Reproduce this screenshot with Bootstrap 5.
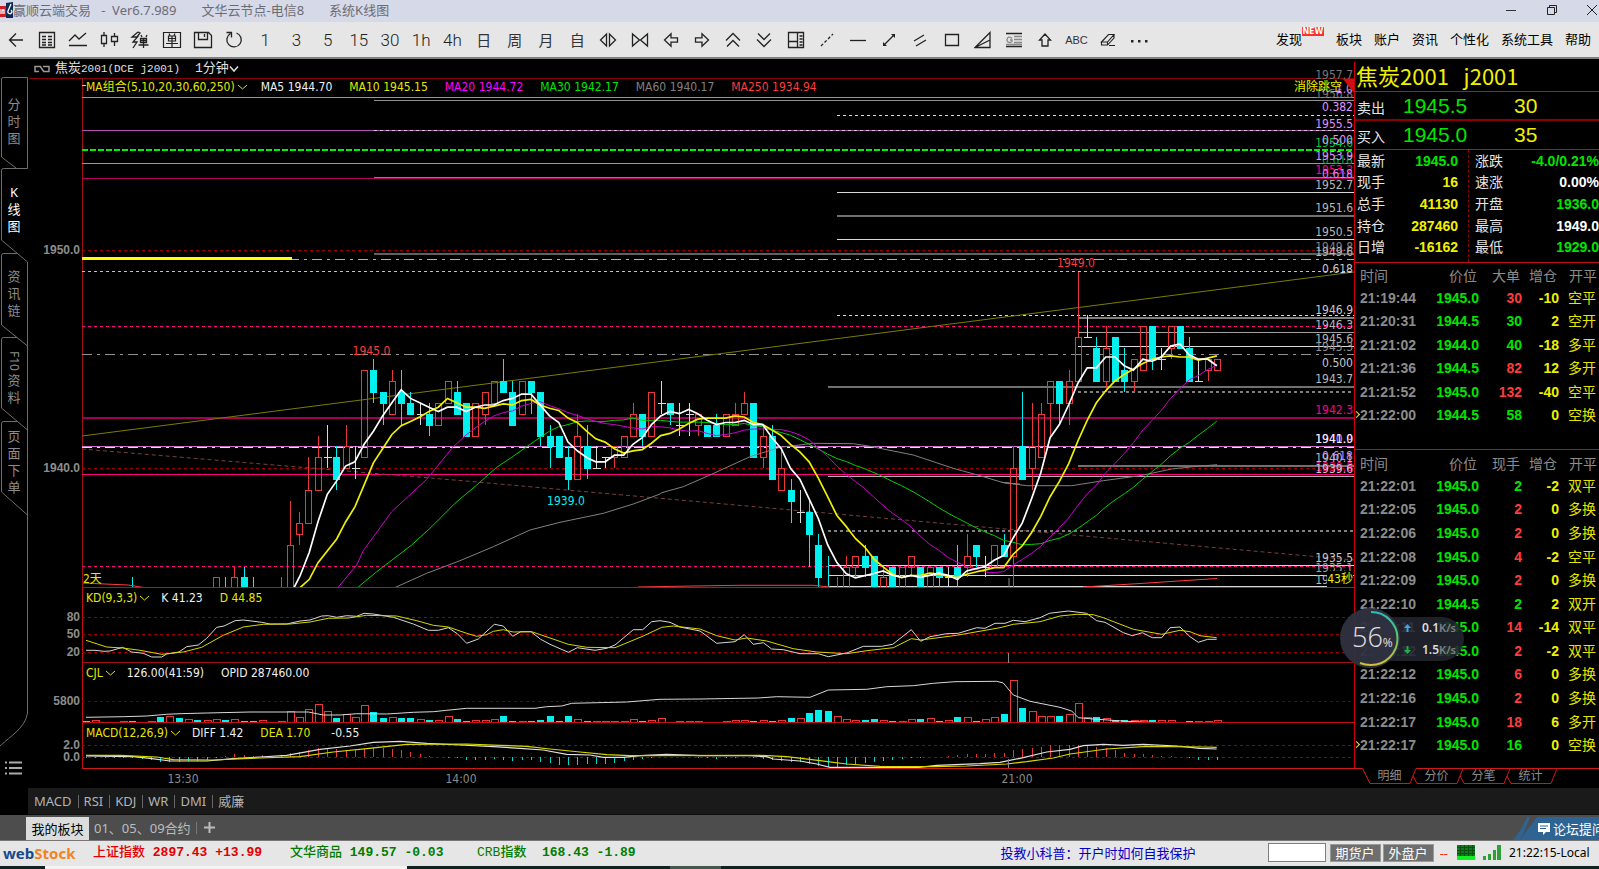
<!DOCTYPE html>
<html lang="zh-CN">
<head>
<meta charset="utf-8">
<meta name="viewport" content="width=device-width, initial-scale=1">
<title>赢顺云端交易</title>
<link href="https://cdn.jsdelivr.net/npm/bootstrap@5.3.0/dist/css/bootstrap.min.css" rel="stylesheet">
<style>
:root{--ui:"Noto Sans","Noto Sans CJK SC",sans-serif;--num:"Liberation Sans","Noto Sans CJK SC",sans-serif;--tah:"DejaVu Sans Condensed","Noto Sans","Noto Sans CJK SC",sans-serif}
body{font-family:var(--ui);font-size:13px;line-height:16px;background:#000;color:#e6e6e6;overflow-x:hidden}
button{background:none;border:0;padding:0;color:inherit;font:inherit;line-height:inherit}
a{color:inherit;text-decoration:none}
svg{display:block}
.ic{fill:none;stroke:#222;stroke-width:1.3}
.titlebar{height:22px;padding-bottom:2px;background:#d6d9e8;color:#6c6c74;font-size:13px;gap:25px}
.appmark{width:13px;height:16px}
.winctl{width:94px}
.winctl button{width:41px}
.winctl button:last-child{width:12px}
.toolbar{height:37px;background:#e6e6e6;border-bottom:2px solid #7c7f80;color:#222}
.tools{width:72.2%}
.tools button{flex:1 1 0;min-width:0;height:34px;display:flex;align-items:center;justify-content:center;font-size:15px;color:#333}
.tools .seg{font-family:Roboto,sans-serif;font-weight:300;font-size:17px;color:#222}
.tools .abc{font-family:"Liberation Sans",sans-serif;font-size:11px}
.topmenu{gap:12px;padding-right:8px;padding-bottom:2px;color:#000}
.newtag{position:absolute;left:100%;top:-4px;background:#ff2d2d;color:#fff;font-size:8px;line-height:9px;width:22px;height:9px;text-align:center;font-family:"DejaVu Sans",sans-serif;font-weight:700}
.discover{margin-right:22px}
.rail{width:28px;flex:none}
.rail nav{position:relative;height:689px;padding-top:18px}
.rail nav>svg{position:absolute;left:0;top:0}
.rail nav button{position:relative;display:flex;flex-direction:column;justify-content:center;align-items:center;height:84px;width:28px;padding-bottom:3px;font-size:13px;line-height:17px;color:#8c8c8c}
.rail nav button:first-of-type{height:92px}
.rail nav button.on{color:#fff}
.rail span{display:block;width:13px;word-break:break-all;text-align:center}
.rail .vert{writing-mode:vertical-rl;width:17px;font-size:12px;height:22px}
.rail .menu{display:flex;align-items:center;height:40px;padding-left:5px}
.chart{min-width:0}
.sym{height:19px;font-family:"Liberation Mono","Noto Sans CJK SC",monospace;font-size:11px;padding-left:5px;color:#e0e0e0}
.sym b{font-weight:400;font-size:13px}
.period{margin-left:15px}
.pane{display:grid}
.pane>*{grid-area:1/1}
.pane>svg{width:100%;height:auto;overflow:visible}
.pane .legend{font-family:var(--tah);font-size:12px;padding-left:58px;gap:17px;height:18px;position:relative;color:#f0f0f0;white-space:nowrap}
.pane .sub{height:20px}
.legend button{display:flex;align-items:center;gap:2px;color:#e6e600;margin-right:-4px}
.sub button{margin-right:-6px}
.ylw{color:#e6e600}
.quote{width:245px;flex:none;position:relative;padding-top:3px}
.quote .in{border-left:1px solid #c00;height:706px}
.qname{font-family:"Noto Sans CJK SC",sans-serif;font-size:22px;line-height:26px;height:30px;color:#f0f000;border-bottom:1px solid #c01010;padding-left:1px;white-space:pre}
.qrow{display:grid;grid-template-columns:46px 111px 1fr;font-size:14px;padding-left:2px;align-items:center;height:29px}
.qrow span{padding-top:3px}
.qrow b{font:400 21px/28px var(--num)}
.sell{border-bottom:2px solid #8b0000}
.buy{border-bottom:1px solid #c01010}
.g{color:#00e600}.r{color:#ff3c3c}.y{color:#f0f000}.w{color:#fff}
table{border-collapse:collapse;width:100%;table-layout:fixed}
td,th{padding:0;white-space:nowrap;font-size:14px;line-height:18px;vertical-align:middle}
td.n{font:700 14px/18px var(--num);text-align:right}
.stats{height:113px;border-bottom:1px solid #c01010;display:grid;grid-template-columns:113px 1fr}
.stats table{height:108px}
.stats th{font-weight:400;padding-left:2px;width:36px}
.stats td{padding-right:10px}
.stats div+div{border-left:1px dashed #8b0000}
.stats div+div th{padding-left:6px;width:40px}
.stats div+div td{padding-right:0}
.deals th{font-weight:400;color:#8c8c8c;text-align:right;padding-right:2px}
.deals th:first-child,.deals td:first-child{text-align:left;padding-left:5px;color:#8c8c8c}
.deals td.k{color:#e6e600;text-align:right;padding-right:3px}
.d1{height:187px;border-bottom:1px solid #c01010;padding-top:2px}
.d1 table{height:162px}.d2 table{height:304px}
.d2{height:319px;padding-top:3px}
.deals thead tr{height:21px}
.c1{width:68px}.c2{width:56px}.c3{width:43px}.c4{width:37px}
.now td:first-child{position:relative}
.now td:first-child::before{content:"";position:absolute;left:-1px;top:50%;width:5px;height:5px;margin-top:-3px;border:solid #f0f000;border-width:1px 1px 0 0;transform:rotate(45deg)}
.qtabs{display:grid;height:20px}
.qtabs>*{grid-area:1/1}
.qtabs div{padding-left:12px;position:relative}
.qtabs button{width:47px;height:16px;font-size:12px;color:#8c8c8c}
.inds{background:#1a1a1a;height:27px;padding-left:6px;color:#b4b4b4;border-bottom:1px solid #0c0c0c}
.inds button+button::before{content:"";display:inline-block;width:1px;height:13px;background:#666;margin:0 5px 0 6px;vertical-align:-2px}
.boards{background:#4d4d4d;height:26px;padding-left:26px;color:#bdbdbd;border-bottom:1px solid #777}
.boards .on{background:#dcdcdc;color:#000;height:23px;width:63px}
.boards .b2{padding-left:5px}
.boards .plus{border-left:1px solid #777;margin-left:5px;padding-left:7px;height:12px}
.forum{display:flex;align-items:center;color:#fff;height:23px;width:86px;overflow:hidden;position:relative;padding-left:25px;gap:3px;white-space:nowrap}
.forum .bg{position:absolute;left:0;top:0}
.forum .lab{position:relative;flex:none}
.status{background:#e6e6e6;height:25px;padding-bottom:2px;color:#000}
.logo{font:700 15px/18px "Noto Sans",sans-serif;color:#164a8c;width:93px;padding-left:3px}
.logo i{font-style:normal;color:#f58220}
.idx{font:700 13px/16px "Liberation Mono","Noto Sans CJK SC",monospace;white-space:pre;color:#007c00}
.idx span{font-weight:500;font-size:13px}
.up{color:#e00000;width:197px}.dn{width:187px}
.tip{color:#0000c8;margin-right:72px}
.status input{width:58px;height:19px;border:1px solid #808080;background:#fff;padding:0 2px}
.status .acct{width:51px;height:18px;background:#6e6e6e;color:#fff;border:1px solid #9a9a9a;font-size:13px;line-height:14px;margin-right:2px}
.dash{padding:0 5px 0 4px;color:#ff2020}
.clock{font-size:12px;width:90px}
.taskbar{height:3px;background:#10241f;display:grid;grid-template-columns:45px 362px 263px 51px 1fr}
.taskbar i:nth-child(2){background:#f4f4f4}.taskbar i:nth-child(4){background:#44584f}
.speed{position:absolute;left:-14px;top:549px;width:124px;height:60px}
.speed .pill{position:absolute;left:30px;top:9px;width:94px;height:44px;border-radius:0 22px 22px 0;background:rgba(34,36,48,.88);font-size:12px;font-weight:600;color:#dcdcdc;padding-left:34px;display:grid;grid-template-rows:1fr 1fr}
.speed .pill div{display:flex;align-items:center;gap:9px;white-space:nowrap}
.speed small{color:#7e8088;font-size:11px}
.speed .pill svg{margin-right:2px}
.speed .ring{position:absolute;left:0;top:0}
.speed .pct{position:absolute;left:12px;top:14px;font:300 27px/30px "Open Sans","Noto Sans",sans-serif;color:#e0e0e0}
.speed .pct span{font-size:12px;font-weight:400}
</style>
</head>
<body>
<header>
<div class="titlebar d-flex align-items-center">
  <div class="d-flex align-items-center"><svg class="appmark" viewBox="0 0 13 16"><path d="M0 4h6v11H0z" fill="#d01c24"/><path d="M6 1l7-1v16H6z" fill="#0c2a55"/><path d="M0 12V7M2 12V8h2v4M11 2L8 9a2 2 0 1 0 3-1" stroke="#fff" fill="none" stroke-width="1.3"/></svg>
  <span class="text-nowrap">赢顺云端交易&nbsp;&nbsp; -&nbsp; Ver6.7.989</span></div>
  <span>文华云节点-电信8</span><span>系统K线图</span>
  <div class="winctl d-flex ms-auto">
    <button aria-label="最小化"><svg class="ic" width="12" height="12"><path d="M1 6.500h10" stroke="#333" stroke-width="1"/></svg></button>
    <button aria-label="还原"><svg class="ic" width="12" height="12"><path d="M1.500 3.500h7v7h-7zM3.500 3.500v-2h7v7h-2" stroke-width="1"/></svg></button>
    <button aria-label="关闭"><svg class="ic" width="11" height="12"><path d="M0 1l10 10M10 1L0 11" stroke-width="1"/></svg></button>
  </div>
</div>
<div class="toolbar d-flex align-items-center">
  <div class="tools d-flex">
    <button aria-label="返回"><svg class="ic" width="16" height="16"><path d="M15 8H2M8 1.500L1.500 8 8 14.500"/></svg></button>
    <button aria-label="报价"><svg class="ic" width="18" height="18"><path d="M1.500 1.500h15v15h-15zM4 5.500h4M10 5.500h4M4 8.500h4M10 8.500h4M4 11.500h4M10 11.500h4M4 14h4M10 14h4"/></svg></button>
    <button aria-label="分时"><svg class="ic" width="20" height="18"><path d="M1 10l6-6 4 4 7-6M1 14.500h18"/></svg></button>
    <button aria-label="K线"><svg class="ic" width="20" height="18"><path d="M2.500 4.500h5v8h-5zM5 1v3.500M5 12.500V16M12.500 5.500h6v5h-6zM15.500 2v3.500M15.500 10.500V15"/></svg></button>
    <button aria-label="闪弹"><svg class="ic" width="20" height="18"><path d="M8 1L2 6h5.500L3 11h4l-4 6M8 1l2 1-3 4M11 4l1 2M17 4l-1 2M10.500 7.500h6v4h-6zM10.500 9.500h6M13.500 7.500V17M8.500 14h10"/></svg></button>
    <button aria-label="下单"><svg class="ic" width="20" height="18"><path d="M1.500 1.500h17v15h-17zM7 2.500l1 2M13 2.500l-1 2M6.500 5h7v5h-7zM6.500 7.500h7M10 5v11M4 12.500h12" stroke-width="1.2"/></svg></button>
    <button aria-label="保存"><svg class="ic" width="20" height="18"><path d="M1.500 1.500h14l3 3v12h-17zM5.500 1.500v7h9v-7M11.500 3v3"/></svg></button>
    <button aria-label="刷新"><svg class="ic" width="18" height="18"><path d="M11.500 2a7.200 7.200 0 1 1-6 .5M1.500 1.500h5v5"/></svg></button>
    <button class="seg">1</button><button class="seg">3</button><button class="seg">5</button><button class="seg">15</button><button class="seg">30</button><button class="seg">1h</button><button class="seg">4h</button>
    <button>日</button><button>周</button><button>月</button><button>自</button>
    <button aria-label="放大"><svg class="ic" width="18" height="16"><path d="M7.500 2v12L1.500 8zM10.500 2v12l6-6z"/></svg></button>
    <button aria-label="缩小"><svg class="ic" width="18" height="16"><path d="M1.500 2v12l7-6zM16.500 2v12l-7-6z"/></svg></button>
    <button aria-label="左移"><svg class="ic" width="16" height="16"><path d="M1.500 8L8 1.800v4h6.500v4.400H8v4z"/></svg></button>
    <button aria-label="右移"><svg class="ic" width="16" height="16"><path d="M14.500 8L8 1.800v4H1.500v4.400H8v4z"/></svg></button>
    <button aria-label="上翻"><svg class="ic" width="16" height="16"><path d="M1 8.500l7-7 7 7M2 14.500l6-6 6 6"/></svg></button>
    <button aria-label="下翻"><svg class="ic" width="16" height="16"><path d="M1 7.500l7 7 7-7M2 1.500l6 6 6-6"/></svg></button>
    <button aria-label="布局"><svg class="ic" width="18" height="18"><path d="M1.500 1.500h15v15h-15zM10.500 1.500v15M1.500 10.500h9M12.500 5h3M12.500 8h3M12.500 11h3M12.500 14h3"/></svg></button>
    <button aria-label="虚线"><svg class="ic" width="16" height="16"><path d="M2 14L14 2" stroke-dasharray="3 2"/></svg></button>
    <button aria-label="横线"><svg class="ic" width="16" height="16"><path d="M0 8.500h16"/></svg></button>
    <button aria-label="线段"><svg class="ic" width="16" height="16"><path d="M3 13L13 3"/><path d="M10 2h4v4zM2 10v4h4z" fill="#222" stroke="none"/></svg></button>
    <button aria-label="平行线"><svg class="ic" width="16" height="16"><path d="M2 9l10-6M4 14l10-6"/></svg></button>
    <button aria-label="矩形"><svg class="ic" width="16" height="16"><path d="M1.500 2.500h13v11h-13z"/></svg></button>
    <button aria-label="扇形"><svg class="ic" width="18" height="18"><path d="M1 16.500L16 1.500v15zM1 16.500L16 9"/></svg></button>
    <button aria-label="黄金分割"><svg class="ic" width="16" height="16"><path d="M0 1.500h16M0 14.500h16"/><path d="M8 4.500h8M8 7.500h8M8 10.500h8M0 12.500h16M6 6.500C4 4 1 5 1 8s4 3 5 1.500V8H4" stroke="#888"/></svg></button>
    <button aria-label="箭头"><svg class="ic" width="14" height="16"><path d="M7 2L1.500 8H4v6h6V8h2.500z"/></svg></button>
    <button class="abc">ABC</button>
    <button aria-label="橡皮"><svg class="ic" width="16" height="14"><path d="M1.500 9l7-7.500h5.500l-6.500 7.500zM1.500 9v3h6l6.500-7V1.500M7.500 9v3M9 12.500h6" stroke-width="1.1"/></svg></button>
    <button aria-label="更多"><svg width="18" height="8"><path d="M1 4h2.500v2.500H1zM8 4h2.500v2.500H8zM15 4h2.500v2.500H15z" fill="#222"/></svg></button>
  </div>
  <nav class="topmenu d-flex ms-auto">
    <a href="#" class="discover position-relative">发现<span class="newtag">NEW</span></a><a href="#">板块</a><a href="#">账户</a><a href="#">资讯</a><a href="#">个性化</a><a href="#">系统工具</a><a href="#">帮助</a>
  </nav>
</div>
</header>

<main class="d-flex">
  <aside class="rail">
    <nav>
      <svg width="28" height="689" viewBox="0 59 28 689" fill="none" stroke="#6e6e6e"><path d="M16 168L1.500 157V79q0-1.500 2-1.500h24V168.500M27.500 168.500h-24q-2 0-2 2V240l26 22V713Q26 724 14 734T0 746M17 253.500H3.500q-2 0-2 2V325l26 21M17 337.500H3.500q-2 0-2 2V408l26 22M17 421.500H3.500q-2 0-2 2V492l26 23"/></svg>
      <button><span>分时图</span></button><button class="on"><span>K线图</span></button><button><span>资讯链</span></button><button><span class="vert">F10</span><span>资料</span></button><button><span>页面下单</span></button>
    </nav>
    <button class="menu" aria-label="菜单"><svg width="17" height="14"><path d="M0 1.500h2M4 1.500h13M0 7h2M4 7h13M0 12.500h2M4 12.500h13" stroke="#aaa" stroke-width="2"/></svg></button>
  </aside>

  <section class="chart flex-grow-1">
    <div class="sym d-flex align-items-center"><svg class="me-1" width="18" height="10" fill="none" stroke="#999" stroke-width="1.500"><path d="M7 2.500H2v5h4M7 2l4 6M10 2.500h6v5h-5"/></svg><span><b>焦炭</b>2001(DCE j2001)</span><button class="period d-flex align-items-center"><b>1分钟</b><svg width="10" height="8" fill="none" stroke="#ddd" stroke-width="1.500"><path d="M1 1.500l4 4.500 4-4.500"/></svg></button></div>
    <div class="pane"><svg id="price" viewBox="28 78 1326 510"></svg>
      <div class="legend d-flex align-items-center"><button>MA组合(5,10,20,30,60,250)<svg width="11" height="8" fill="none" stroke="#e6e600"><path d="M1 2l4.500 4L10 2"/></svg></button><span>MA5 1944.70</span><span class="ylw">MA10 1945.15</span><span style="color:#f0f">MA20 1944.72</span><span style="color:#00e600">MA30 1942.17</span><span style="color:#808080">MA60 1940.17</span><span class="r">MA250 1934.94</span></div></div>
    <div class="pane"><svg id="kd" viewBox="28 588 1326 75"></svg>
      <div class="legend sub d-flex align-items-center"><button>KD(9,3,3)<svg width="11" height="8" fill="none" stroke="#e6e600"><path d="M1 2l4.500 4L10 2"/></svg></button><span>K 41.23</span><span class="ylw">D 44.85</span></div></div>
    <div class="pane"><svg id="vol" viewBox="28 663 1326 60"></svg>
      <div class="legend sub d-flex align-items-center"><button>CJL<svg width="11" height="8" fill="none" stroke="#e6e600"><path d="M1 2l4.500 4L10 2"/></svg></button><span>126.00(41:59)</span><span>OPID 287460.00</span></div></div>
    <div class="pane"><svg id="macd" viewBox="28 723 1326 65"></svg>
      <div class="legend sub d-flex align-items-center"><button>MACD(12,26,9)<svg width="11" height="8" fill="none" stroke="#e6e600"><path d="M1 2l4.500 4L10 2"/></svg></button><span>DIFF 1.42</span><span class="ylw">DEA 1.70</span><span class="ms-1">-0.55</span></div></div>
  </section>

  <aside class="quote">
    <div class="in">
      <div class="qname">焦炭2001   j2001</div>
      <div class="qrow sell"><span>卖出</span><b class="g">1945.5</b><b class="y">30</b></div>
      <div class="qrow buy"><span>买入</span><b class="g">1945.0</b><b class="y">35</b></div>
      <div class="stats">
        <div><table><tr><th>最新</th><td class="n g">1945.0</td></tr><tr><th>现手</th><td class="n y">16</td></tr><tr><th>总手</th><td class="n y">41130</td></tr><tr><th>持仓</th><td class="n y">287460</td></tr><tr><th>日增</th><td class="n y">-16162</td></tr></table></div>
        <div><table><tr><th>涨跌</th><td class="n g">-4.0/0.21%</td></tr><tr><th>速涨</th><td class="n w">0.00%</td></tr><tr><th>开盘</th><td class="n g">1936.0</td></tr><tr><th>最高</th><td class="n w">1949.0</td></tr><tr><th>最低</th><td class="n g">1929.0</td></tr></table></div>
      </div>
      <div class="deals d1"><table><colgroup><col class="c1"><col class="c2"><col class="c3"><col class="c4"><col></colgroup><thead><tr><th>时间</th><th>价位</th><th>大单</th><th>增仓</th><th>开平</th></tr></thead><tbody id="bigDeals"></tbody></table></div>
      <div class="deals d2"><table><colgroup><col class="c1"><col class="c2"><col class="c3"><col class="c4"><col></colgroup><thead><tr><th>时间</th><th>价位</th><th>现手</th><th>增仓</th><th>开平</th></tr></thead><tbody id="deals"></tbody></table></div>
    </div>
    <div class="qtabs">
      <svg width="245" height="20" viewBox="1354 768 245 20" fill="none" stroke="#d01818"><path d="M1354 768.500h8.500l7.500 15h40l6-15h183M1413 776l4 7.500h40l6-15M1460 776l4 7.500h40l6-15M1507 776l4 7.500h40l6-15"/></svg>
      <div class="d-flex"><button>明细</button><button>分价</button><button>分笔</button><button>统计</button></div>
    </div>
    <div class="speed">
      <div class="pill"><div><svg width="7" height="8"><path d="M3.500 0L7 4H4.500v4h-2V4H0z" fill="#38a8e8"/></svg><span>0.1<small>K/s</small></span></div><div><svg width="7" height="8"><path d="M3.500 8L7 4H4.500V0h-2v4H0z" fill="#22b14c"/></svg><span>1.5<small>K/s</small></span></div></div>
      <svg class="ring" width="60" height="60"><defs><linearGradient id="rg" x1="0" y1="0" x2="0" y2="1"><stop offset="0" stop-color="#28c0b8"/><stop offset=".5" stop-color="#60c860"/><stop offset="1" stop-color="#d0c038"/></linearGradient></defs><circle cx="30" cy="30" r="30" fill="#2f3240" fill-opacity=".95"/><path d="M31 4a26.500 26.500 0 0 1 0 53q-6 0-11-2" fill="none" stroke="url(#rg)" stroke-width="2"/></svg>
      <div class="pct">56<span>%</span></div>
    </div>
  </aside>
</main>

<footer>
<div class="d-flex"><div class="rail"></div><div class="inds flex-grow-1 d-flex align-items-center"><button>MACD</button><button>RSI</button><button>KDJ</button><button>WR</button><button>DMI</button><button>威廉</button></div></div>
<div class="boards d-flex align-items-end"><button class="on">我的板块</button><button class="b2 align-self-center">01、05、09合约</button><button class="plus align-self-center d-flex align-items-center" aria-label="添加"><svg width="11" height="11"><path d="M5.500 0v11M0 5.500h11" stroke="#bbb" stroke-width="2"/></svg></button>
<a href="#" class="forum ms-auto"><svg class="bg" width="86" height="23"><path d="M7 23L24 0h62v23z" fill="#2e6494"/><path d="M0 23Q8 14 14 0h3Q12 14 7 23z" fill="#2e6494"/></svg><svg class="lab" width="12" height="12"><path d="M0 0h12v9H8l-3 3V9H0z" fill="#fff"/><path d="M2 3h8M2 5.500h6" stroke="#2e6494"/></svg><span class="lab">论坛提问</span></a></div>
<div class="status d-flex align-items-center">
  <div class="logo">web<i>Stock</i></div>
  <div class="idx up"><span>上证指数</span> 2897.43 +13.99</div>
  <div class="idx dn"><span>文华商品</span> 149.57 -0.03</div>
  <div class="idx"><span>CRB指数</span>  168.43 -1.89</div>
  <a href="#" class="tip ms-auto">投教小科普：开户时如何自我保护</a>
  <input aria-label="代码" class="me-1"><button class="acct">期货户</button><button class="acct">外盘户</button>
  <span class="dash">--</span>
  <svg width="18" height="15" class="ms-1"><path d="M0 0h18v11H0z" fill="#0f7a1c"/><path d="M0 11h18v4H0z" fill="#10f020"/><path d="M0 2.500h18M0 5.500h18M0 8.500h18M3.500 0v11M7.500 0v11M11.500 0v11M15.500 0v11" stroke="#0a5012"/></svg>
  <svg width="18" height="15" class="mx-2"><path d="M0 11h3v4H0zM5 9h3v6H5zM10 5h3v10h-3zM14 0h4v15h-4z" fill="#2fa035"/></svg>
  <span class="clock">21:22:15-Local</span>
</div>
<div class="taskbar"><i></i><i></i><i></i><i></i><i></i></div>
</footer>

<script src="https://cdn.jsdelivr.net/npm/bootstrap@5.3.0/dist/js/bootstrap.bundle.min.js"></script>
<script>
const RED='#ff3c3c',CYAN='#00f0f0',FRAME='#c01010';
const X=i=>86+i*9.27, Y=p=>468.3-(p-1940)*21.83;
const hl=(y,x1,c,w=1,dash='',x2=1354)=>`<line x1="${x1}" x2="${x2}" y1="${y}" y2="${y}" stroke="${c}" stroke-width="${w}" stroke-dasharray="${dash}" shape-rendering="crispEdges"/>`;
const pl=(pts,c,w=1,extra='')=>`<polyline points="${pts.map(p=>p.map(v=>Math.round(v*10)/10).join(',')).join(' ')}" fill="none" stroke="${c}" stroke-width="${w}" ${extra}/>`;
const tx=(s,x,y,c,a='start',extra='')=>`<text x="${x}" y="${y+4.5}" fill="${c}" text-anchor="${a}" font-size="12" ${extra||'font-family="DejaVu Sans Condensed,Noto Sans,Noto Sans CJK SC,sans-serif"'}>${s}</text>`;
const ax=(s,y)=>tx(s,80,y-.5,'#8c8c8c','end','font-family="Liberation Sans,sans-serif" font-weight="700"');
// traced points: pairs in thirds of a pixel from an origin
const tr=(s,ox,oy)=>s.split(' ').map(p=>{const[a,b]=p.split(',').map(Number);return[ox+a/3,oy+b/3]});

// index, open, close, high, low (offset from 1900)
const raw=`5 34.4 34 35 34|14 34 35 35 34|15 34.4 34 35 34|16 34 35 35.5 34|17 35 34 35.5 34|18 34.4 34 35 34|21 34 34.3 35 34|22 34 36.5 38.5 34|23 37 37.5 38 36.5|24 37.5 39 40.5 37.5|25 39 40.5 41.5 39|26 40.5 40.5 42 40|27 40.5 39.5 41 39|28 40 41 42 40|29 40 40 41 39.5|30 40.5 44.5 44.5 40.5|31 44.5 43.5 45 43|32 43.5 43 43.5 42|33 42.5 44 44.5 42.5|34 43.5 43 44.5 42|35 43 42.5 43.5 42.5|36 42.5 42.5 43 42|37 42.5 42 43 41.5|38 42 43 43 42|39 43 44 44 43|40 43.5 42.5 44 42.5|41 43 41.5 43 41.5|42 41.5 43 43 41.5|43 42.5 43.5 43.5 42|44 43 44 44 43|45 44 43.5 45 43.5|46 43.5 42 44 42|47 42.5 44 44 42.5|48 44 43.5 44 42.5|49 43.5 41.5 43.5 41|50 41.5 41 42 40|51 41.5 40.5 41.5 40.5|52 40.5 39.5 41 39|53 39.5 41.5 42.5 39.5|54 41 40 42 39.5|55 40 40 41 40|56 40.5 40.5 40.5 40|57 40.5 41 41 40|58 40.5 41.5 41.5 40.5|59 41.5 42.5 43 41.5|60 42.5 41.5 42.5 41|61 41.5 43.5 43.5 41.5|62 43 43 44 42.5|63 43 42.5 43 42|64 42 42 43 41.5|65 42.5 42.5 43 41.5|66 42 42.5 42.5 41.5|67 42 41.5 42 41.5|68 42 41.5 42.5 41.5|69 41.5 42.5 42.5 41.5|70 42 42.5 43 42|71 42.5 43 43.5 42.5|72 43 40.5 43 40.5|73 40.5 41.5 42 40|74 41.5 39.5 42 39.5|75 39 40 41 39|76 39 38.5 39.5 37.5|77 38 38 39 37.5|78 38 37 38.5 35.5|79 36.5 35 37 34.5|80 34.4 34 36 34|81 34 34.4 35 34|82 34.5 35.5 36 34|83 35.5 36 36 35|84 36 35.5 36.5 35|85 36 34.5 36 34|86 34.5 35 35.5 34|87 35.5 34.5 35.5 34|88 34 35.5 35.5 34|89 35.5 36 36 35|90 35.5 34 35.5 34|91 34 35.5 35.5 34|92 35.5 35 35.5 34.5|93 35 35 35.5 34|94 35.5 35 36.5 34|95 35.5 36 37 35|96 36.5 36 36.5 35.5|97 35.5 35.5 36 35|98 35.5 36.5 36.5 35.5|99 36.5 36 37 36|100 36 40 41 34|101 41 39.5 43.5 39.5|102 40 41 43 39|103 40.5 42.5 43 40.5|104 43 44 44 41.5|105 44 43 44 42|106 43 44 44.5 42|107 44 46 49 44|108 46 46 47 46|109 45.5 44 46 44|110 44 45.5 46.5 43.5|111 46 44 46 44|112 44.5 44 45.5 43.5|113 44 45 45 43.5|114 44.5 46.5 46.5 44.5|115 46.5 45 46.5 44.5|116 45 45 45.5 44.5|117 45.5 46.5 46.5 45|118 46.5 45.5 46.5 45.5|119 45.5 44 46 44|120 44 44 45 44|121 44.5 45 45 44|122 44.5 45 45 44.5`;
const bars=raw.split('|').map(r=>r.split(' ').map(Number));
const close={};bars.forEach(b=>close[b[0]]=b[2]);
const ma=(n,from)=>{const o=[];for(let i=from;i<=122;i++){let s=0;for(let k=0;k<n;k++)s+=close[i-k];o.push([X(i),Y(1900+s/n)])}return o};

let s='';
s+=hl(78.5,29,'#8b0000')+hl(587.5,82,FRAME);
s+=`<path d="M82.500 78V588" stroke="#a01010" shape-rendering="crispEdges"/>`;
const P='#d070d0',G='#808080',L='#d8d8d8',HP='#ff0080',DP='#b80060',DR='#9a0000';
[[97.5,82,P],[100.5,374,'#909090'],[115.5,837,L,1,'3 3'],[130.5,82,'#b050b4',1],[130.5,374,'#e0c0e0',1,'3 3'],[150,82,'#00f000',2,'6 2'],[163.5,82,P],[178,82,DP,1],[177.5,374,'#c060a0'],[192.5,837,L],[216,837,'#707070',2],[239.5,837,L],[250.5,82,DR,1,'3 3'],[254,374,'#606060',2],[259.5,82,'#b0b0b0',1,'10 5 3 5'],[271.5,82,'#f0a0f0',1,'3 3'],[315.5,837,L,1,'3 3'],[318,1078,G,2],[326.5,82,HP,1,'3 3'],[332.5,1078,'#a0a0a0'],[346.5,1078,L],[354.5,82,'#909090',1,'10 5 3 5'],[387,828,'#707070',2],[392,1078,G,2,'3 3'],[418,82,'#a00058',2],[446.5,82,P],[447.5,82,'#e8e8e8',1,'10 5 3 5'],[466,1078,'#707070',2],[468.5,82,DR,1,'3 3'],[474.5,82,HP],[476.5,828,'#b0b0b0'],[531,828,G,2,'3 3'],[565.5,828,L],[566.5,82,HP,1,'3 3'],[575.5,828,L],[586.5,828,L,1,'',1327]].forEach(a=>s+=hl(...a));
s+=hl(258,82,'#ffff00',3,'',292);
s+=pl([[82,436],[1354,272]],'#7c7c00')+pl([[82,449],[460,480.500],[1354,560]],'#7a4040',1,'stroke-dasharray="4 3"');
s+=`<defs><clipPath id="plot"><path d="M83 79H1354V587H83z"/></clipPath></defs><g clip-path="url(#plot)">`;
bars.forEach(([i,o,c,h,l])=>{
  const x=Math.round(X(i))+.5, yo=Math.round(Y(1900+o))+.5, yc=Math.round(Y(1900+c))+.5, yh=Y(1900+h), yl=Y(1900+l);
  if(o===c) s+=`<path d="M${x} ${yh}V${yl}M${x-4} ${yc}h8" stroke="#d8d8d8" shape-rendering="crispEdges"/>`;
  else if(c>o) s+=`<path d="M${x} ${yh}V${yc}M${x} ${yo}V${yl}M${x-3} ${yc}h6V${yo}h-6z" fill="none" stroke="#e83838" shape-rendering="crispEdges"/>`;
  else s+=`<path d="M${x} ${yh}V${yl}" stroke="${CYAN}" shape-rendering="crispEdges"/><path d="M${x-3.500} ${yo-.5}h7V${yc+.5}h-7z" fill="${CYAN}" shape-rendering="crispEdges"/>`;
});
s+=pl([...tr('400,745 500,700 600,662 700,620 810,570 900,547 1030,520 1120,492 1200,462',260,340),...tr('65,458 130,440 210,405 330,350 420,322 520,310 640,311 680,317 820,345 940,385 1020,407 1090,428 1140,433',640,340),...tr('65,727 140,737 275,737 370,722 480,707 575,687 640,680 711,674',980,240)],G);
s+=pl([...tr('290,745 350,695 455,615 515,560 585,490 650,435 710,382 755,352 800,320 841,292 869,273',260,340),...ma(30,51)],'#00d000');
s+=pl([...tr('232,745 290,675 310,632 395,515 500,418 580,320',260,340),...ma(20,41)],'#d000d0');
s+=pl([...tr('118,745 148,718 174,668 230,597 257,545 285,500',260,340),...ma(10,31)],'#f0f000',1.7);
s+=pl([...tr('101,745 120,708 148,637 174,545 202,463',260,340),...ma(5,27)],'#ffffff',1.7);
s+=pl([[82,583],[128,585],[147,588]],RED)+pl([[638,587],[693,586],[740,585.3],[813,585.3],[830,587]],RED)+pl([[1083,587],[1140,583.500],[1217,578.500]],RED);
s+='<path d="M1009 578v10" stroke="#888"/></g>';
[['1957.7',74.5,'#777'],['1956.8',93,'#777'],['1.0',88,'#e080ff'],['0.382',106,'#e090ff'],['1955.5',123,'#e090ff'],['1954.6',142,'#00c840'],['0.500',139,'#e090ff'],['0.618',159,'#00a040'],['1953.9',155,'#e090ff'],['1953.2',169,HP],['0.618',173,'#e080ff'],['1952.7',184,'#b8b8b8'],['1951.6',207,'#b8b8b8'],['1950.5',231,'#b8b8b8'],['1949.8',246,'#808080'],['1949.6',251,'#b8b8b8'],['0.618',268,'#c8c8c8'],['1946.9',309,'#c8c8c8'],['1946.3',324,'#b8b8b8'],['1945.6',338,'#b8b8b8'],['1945.3',346,'#909090'],['0.500',362,'#c8c8c8'],['1943.7',378,'#b8b8b8'],['1942.3',409,HP],['1940.9',438,'#e080ff'],['1941.0',438,'#f0f0f0'],['0.618',455,'#c080ff'],['1940.1',457,'#b8b8b8'],['1939.8',466,HP],['1939.6',468,'#c8c8c8'],['1935.5',557,'#c8c8c8'],['1935.1',567,'#a0a0a0'],['1934.6',579,'#b8b8b8']].forEach(([t,y,c])=>s+=tx(t,1353,y,c,'end'));
s+='<path d="M1327 571h26v15h-26z"/>'+tx('43秒',1353,578.500,'#f0f000','end')+'<path d="M1343 79h11v14z" fill="#d01010"/><path d="M82 85.500h4" stroke="#e6e600"/>'+tx('消除跳空',1294,86.500,'#f0f000');
s+=tx('1945.0',371.500,350,RED,'middle')+tx('1949.0',1076,262,RED,'middle')+tx('1939.0',566,500,CYAN,'middle')+tx('2天',83,578,'#e6e600')+ax('1950.0',250)+ax('1940.0',468);
price.innerHTML=s;

const side=(y1,y2)=>`<path d="M82.500 ${y1}V${y2}" stroke="#c01010" shape-rendering="crispEdges"/>`;
const K=[...tr('258,211 285,211 312,214 330,213 368,202 395,216 430,220 455,231 485,231 500,222 537,216 560,200 595,195 620,175 650,142 672,138 705,122 730,120 785,127 810,132 860,132 900,123 930,120 965,108 985,107 1010,112 1040,107 1070,109 1092,100 1120,102 1180,112 1240,132 1285,151 1315,151 1345,143 1372,161 1400,190 1435,177 1483,133 1510,138',0,580),...tr('38,169 62,155 93,155 122,178 150,193 205,217 232,203 285,211 320,205 345,195 400,149 428,149 455,125 480,122 510,127 540,141 600,153 650,190 705,185 733,164 760,193 790,188 815,207 850,209 900,221 955,221 985,230 1040,219 1090,199 1145,199 1178,193 1234,149 1262,184 1290,170 1340,161 1375,160 1430,143 1455,145 1485,130',500,580),...tr('135,130 160,121 195,125 240,113 268,100 325,93 380,100 410,122 435,127 490,158 517,167 547,158 577,173 605,173 630,143 660,141 690,170 715,187 743,178 770,178',960,580)];
const D=[...tr('258,181 320,201 368,204 420,211 485,223 550,216 605,202 670,166 730,141 790,133 870,132 930,126 985,115 1045,114 1100,106 1190,108 1250,122 1300,136 1345,141 1400,160 1430,169 1460,164 1480,154 1510,149',0,580),...tr('40,156 95,155 205,193 260,202 345,203 430,168 485,142 520,138 600,147 650,167 705,180 740,174 800,183 880,206 950,216 1040,221 1100,212 1180,203 1234,176 1262,180 1370,166 1500,143',500,580),...tr('160,133 240,125 300,108 350,103 400,104 430,113 520,148 605,163 660,151 690,155 720,167 770,173',960,580)];
kd.innerHTML=side(588,663)+[617.5,634.5,652.5].map(y=>hl(y,82,DR,1,'3 3')).join('')+ax('80',617)+ax('50',634)+ax('20',652)+pl(K,'#d8d8d8')+pl(D,'#d8d800')+hl(662.5,82,'#a01010')+'<path d="M1008.500 653v10" stroke="#888"/>';

const V=[-2,2,0,0,1,-2,-1,1,-6,6,-5,3,-3,2,3,-3,3,-2,-2,2,-1,1,11,5,13,18,11,-5,8,5,17,-11,-5,5,-5,-5,3,-3,2,6,-4,-2,2,2,3,-7,-2,1,-2,-3,-7,-2,-7,3,-2,1,1,1,1,3,-2,2,4,-1,1,1,1,0,-1,1,2,2,-2,2,-2,2,-5,4,-10,-13,-12,6,3,2,-3,-4,2,-2,1,3,-4,4,-2,2,-6,5,-2,3,5,-9,42,-15,11,6,6,-7,8,19,5,-6,4,-3,-3,2,2,-3,2,2,-1,-2,1,1,2];
const O=[...tr('258,412 370,410 440,408 500,403 540,401 620,399 750,396 925,396 970,405 1020,405 1070,401 1160,402 1240,397 1300,395 1340,391 1400,385',0,580),...tr('105,385 140,380 185,378 215,370 380,366 480,358 600,357 775,354 830,350 930,352 985,330 1100,328 1160,320 1240,317 1300,310 1365,305',500,580),...tr('110,304 130,309 160,345 210,364 300,382 335,393 355,413 400,417 500,424 600,428',960,580)];
vol.innerHTML=side(663,723)+hl(701.5,82,'#6a0000',1,'3 3')+ax('5800',701)+V.map((v,i)=>{const x=Math.round(X(i))+.5;return v>0?`<path d="M${x-3.500} 722.500v${-v}h7v${v}" fill="none" stroke="#e83838" shape-rendering="crispEdges"/>`:v<0?`<path d="M${x-3.500} 723v${v}h7v${-v}z" fill="${CYAN}" shape-rendering="crispEdges"/>`:''}).join('')+pl(O,'#d8d8d8')+hl(722.5,82,FRAME);

const H=[-1,-1,-1,-1,-1,-1,-2,-3,-5,-5,-5,-4,-4,-3,-1,1,3,2,1,2,1,2,4,5,7,9,9,8,7,7,8,9,9,8,7,5,3,1,0,-1,-1,-3,-3,-3,-2,-3,-4,-3,-3,-5,-6,-8,-8,-8,-7,-7,-7,-6,-4,-3,-2,-1,0,0,0,0,-1,-1,-2,-1,-1,0,-1,-2,-3,-4,-5,-5,-7,-9,-10,-10,-8,-7,-6,-5,-4,-3,-2,-1,-1,0,0,1,2,3,3,3,4,4,7,8,9,10,12,12,12,12,12,10,9,7,4,3,3,2,1,1,0,-1,-3,-3,-3];
const F=[...tr('258,528 400,530 450,535 510,543 620,543 700,536 780,531 860,526 960,508 1050,498 1120,487 1200,484 1280,490 1380,495 1480,500 1560,505',0,580),...tr('130,510 200,523 270,525 310,532 370,532 420,527 500,523 600,527 750,527 800,530 820,537 900,543 950,552 990,562 1100,562 1250,563 1310,556 1440,551 1500,547',500,580),...tr('180,535 260,516 330,508 370,497 430,493 490,496 550,493 650,498 720,505 770,507',960,580)];
const E=[...tr('258,526 360,526 470,531 520,539 640,540 780,534 900,530 1000,516 1100,506 1220,493 1400,492 1500,496',0,580),...tr('80,499 150,507 240,516 320,524 390,527 780,526 860,530 960,542 1040,552 1140,559 1300,560 1400,558',500,580),...tr('140,552 200,545 280,534 330,522 440,507 560,499 730,501 770,502',960,580)];
macd.innerHTML=side(723,768)+hl(745.5,82,DR,1,'3 3')+hl(757.5,82,DR,1,'3 3')+ax('2.0',745)+ax('0.0',757)+H.map((v,i)=>v?`<path d="M${Math.round(X(i))+.5} 757v${-v}" stroke="${v>0?'#e83838':'#00d8d8'}" shape-rendering="crispEdges"/>`:'').join('')+pl(F,'#e0e0e0',1.2)+pl(E,'#d8d800',1.2)+hl(768.5,82,'#d01818')+'<path d="M1008.500 759v9" stroke="#888"/>'+tx('13:30',183,778,'#8c8c8c','middle')+tx('14:00',461,778,'#8c8c8c','middle')+tx('21:00',1017,778,'#8c8c8c','middle');

const rows=(id,list)=>{document.getElementById(id).innerHTML=list.map((r,i)=>{const[t,p,v,c,z,k]=r.split(' ');return `<tr${i===list.length-1?' class="now"':''}><td class="n">${t}</td><td class="n g">${p}</td><td class="n ${c}">${v}</td><td class="n y">${z}</td><td class="k">${k}</td></tr>`}).join('')};
rows('bigDeals',['21:19:44 1945.0 30 r -10 空平','21:20:31 1944.5 30 g 2 空开','21:21:02 1944.0 40 g -18 多平','21:21:36 1944.5 82 r 12 多开','21:21:52 1945.0 132 r -40 空平','21:22:00 1944.5 58 g 0 空换']);
rows('deals',['21:22:01 1945.0 2 g -2 双平','21:22:05 1945.0 2 r 0 多换','21:22:06 1945.0 2 r 0 多换','21:22:08 1945.0 4 r -2 空平','21:22:09 1945.0 2 r 0 多换','21:22:10 1944.5 2 g 2 双开','21:22:11 1945.0 14 r -14 双平','21:22:12 1945.0 2 r -2 双平','21:22:12 1945.0 6 r 0 多换','21:22:16 1945.0 2 r 0 多换','21:22:17 1945.0 18 r 6 多开','21:22:17 1945.0 16 g 0 空换']);
</script>
</body>
</html>
